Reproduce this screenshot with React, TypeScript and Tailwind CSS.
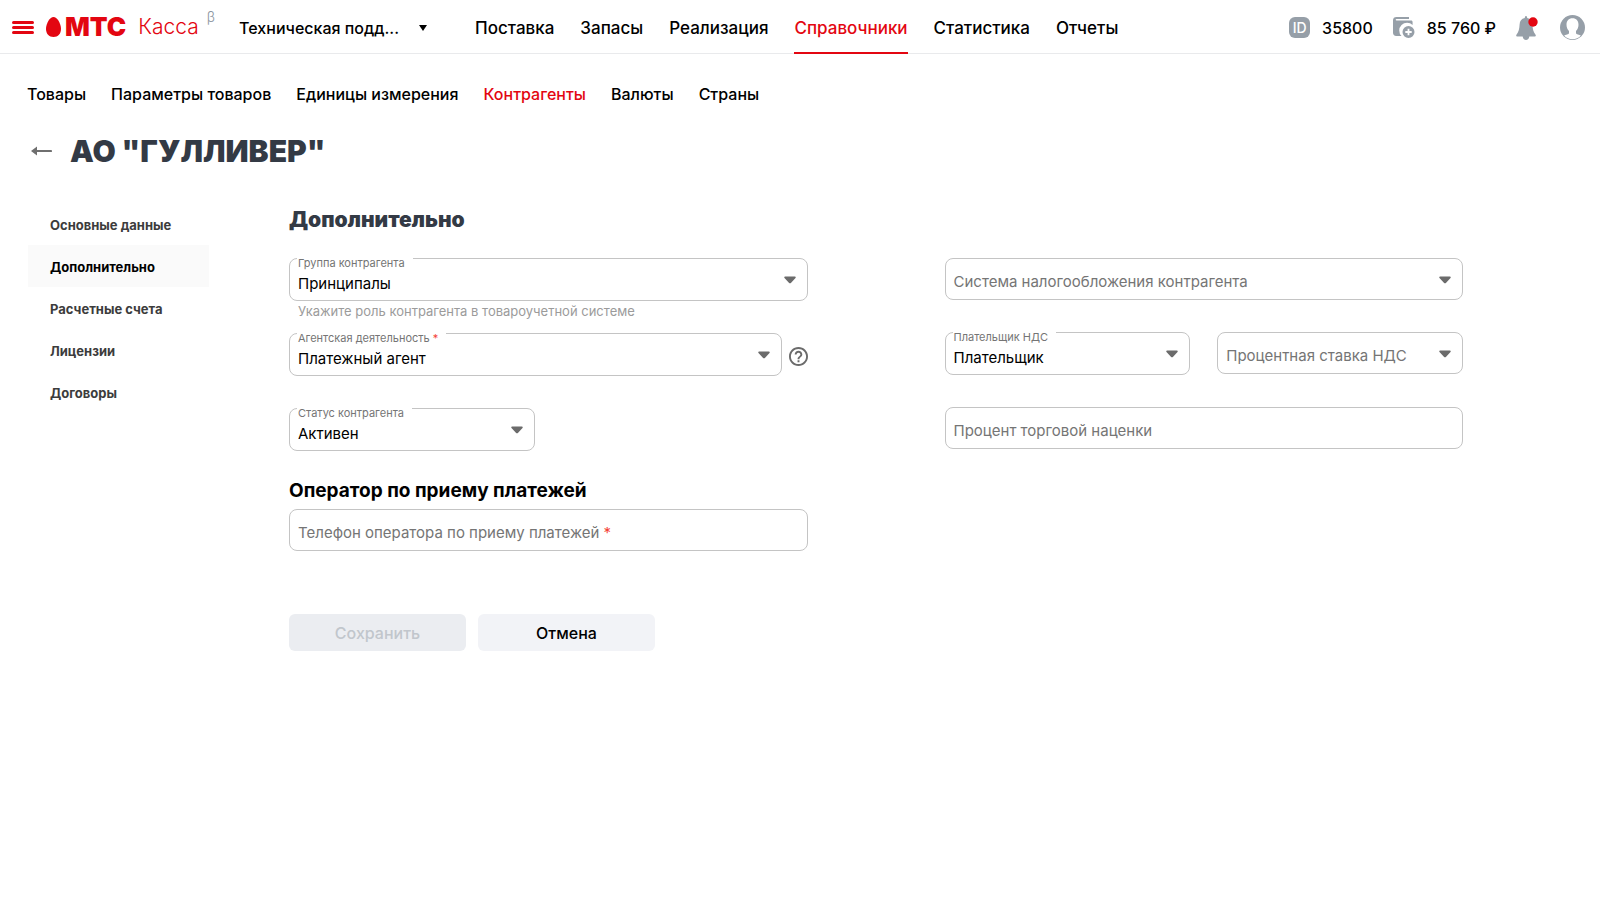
import { ReactNode, useId } from "react";
import clsx from "clsx";

const mainNav = ["Поставка", "Запасы", "Реализация", "Справочники", "Статистика", "Отчеты"];
const subNav = ["Товары", "Параметры товаров", "Единицы измерения", "Контрагенты", "Валюты", "Страны"];
const sections = ["Основные данные", "Дополнительно", "Расчетные счета", "Лицензии", "Договоры"];

type FieldProps = {
  label: string;
  value?: string;
  required?: boolean;
  select?: boolean;
  className?: string;
};

function Field({ label, value = "", required, select, className }: FieldProps) {
  const id = useId();
  const control =
    "block w-full appearance-none rounded-lg border border-[#c4c4c4] bg-white pl-2 text-[15px] text-black outline-none";

  return (
    <div className={clsx("relative", className)}>
      {select ? (
        <select id={id} defaultValue={value} className={clsx(control, value ? "h-[43px] pt-[10px]" : "h-[42px]")}>
          <option value={value}>{value}</option>
        </select>
      ) : (
        <input id={id} type="text" defaultValue={value} className={clsx(control, "h-[42px]")} />
      )}

      {/* Label sits on the border when the field is filled, inside it otherwise */}
      <label
        htmlFor={id}
        className={clsx(
          "pointer-events-none absolute bg-white text-[#757575]",
          value ? "left-2 top-0 pl-px pr-2 text-[11px] leading-[10px]" : "left-2 top-3 pl-px text-[15px] leading-6"
        )}
      >
        {label}
        {required && <span className="text-[#f44336]"> *</span>}
      </label>

      {select && (
        <svg className="pointer-events-none absolute right-3 top-[18px] h-2 w-3" viewBox="0 0 12 8">
          <path d="M1.2 .5h9.6c.9 0 1.3.9.7 1.500L6.900 6.900c-.5.5-1.300.5-1.800 0L.5 2C-.1 1.400.3.5 1.200.5z" fill="#6b6b6b" />
        </svg>
      )}
    </div>
  );
}

function Logo() {
  return (
    <a href="#" className="flex items-center text-[#e30611]">
      <svg className="h-5 w-[15px]" viewBox="0 0 15 20" fill="currentColor">
        <path d="M7.500 0C11 0 15 6.300 15 11.800 15 17 12 20 7.500 20S0 17 0 11.800C0 6.300 4 0 7.500 0z" />
      </svg>
      <span className="ml-1 text-[26px] leading-8 font-black">МТС</span>
      <span className="ml-3 text-[21px] leading-8 font-light">Касса</span>
      <sup className="-top-2.5 ml-2 text-sm font-light text-[#8d969f]">β</sup>
    </a>
  );
}

function WalletIcon() {
  return (
    <svg className="h-[22px] w-[22px]" viewBox="0 0 22 22" fill="#969fa8">
      <path d="M3.500 0H16v2H3.500a.8.8 0 0 0 0 1.600H18c1 0 1.600.6 1.600 1.600V8A7 7 0 0 0 8.500 19H3.200C1.200 19 0 17.800 0 15.800V3.300C0 1.200 1.300 0 3.500 0z" />
      <path
        fillRule="evenodd"
        d="M15.500 9a6 6 0 1 1 0 12 6 6 0 0 1 0-12zm-.9 2.800v2.300h-2.300v1.800h2.300v2.300h1.800v-2.300h2.300v-1.800h-2.300v-2.300z"
      />
    </svg>
  );
}

function BellIcon() {
  return (
    <svg className="h-[26px] w-[22px]" viewBox="0 0 22 26">
      <path
        d="M8.800 3C8.800 1.700 9.200 1 10 1s1.200.7 1.200 2c3.500.6 5 3 5.200 6.500.2 4.500 1 7.500 3 10 .8 1 .4 2-.9 2H1.500c-1.300 0-1.700-1-.9-2 2-2.500 2.800-5.500 3-10C3.800 6 5.300 3.600 8.800 3zM6.700 21.500h6.600c-.2 2.200-1.500 3.500-3.300 3.500s-3.100-1.300-3.300-3.500z"
        fill="#969fa8"
      />
      <circle cx="17" cy="7" r="4.700" fill="#e30611" />
    </svg>
  );
}

function AvatarIcon() {
  return (
    <svg className="h-[25px] w-[25px]" viewBox="0 0 25 25">
      <circle cx="12.500" cy="12.500" r="12.500" fill="#969fa8" />
      <path
        d="M12.500 3.200c3.800 0 6 2.500 6 6.500 0 2.500-.9 4.700-2.500 6.300v2.300c0 1 3.600 1.300 4.800 2.400-2.200 2.300-5 3.500-8.300 3.500s-6.100-1.200-8.300-3.500C5.400 19.600 9 19.300 9 18.300V16c-1.600-1.600-2.500-3.800-2.500-6.300 0-4 2.200-6.500 6-6.500z"
        fill="#fff"
      />
    </svg>
  );
}

function IconButton({ label, children }: { label: string; children: ReactNode }) {
  return (
    <button type="button" aria-label={label}>
      {children}
    </button>
  );
}

function Header() {
  return (
    <header className="flex h-[54px] items-center border-b border-[#e9eaec] pl-3 pr-[15px] text-base font-medium">
      <button type="button" aria-label="Меню" className="mr-3 flex w-[22px] flex-col gap-[2px] pt-0.5">
        <span className="h-[3px] w-full rounded-sm bg-[#e30611]" />
        <span className="h-[3px] w-full rounded-sm bg-[#e30611]" />
        <span className="h-[3px] w-full rounded-sm bg-[#e30611]" />
      </button>
      <Logo />

      <button type="button" className="ml-6 flex w-[188px] items-center justify-between pt-0.5">
        <span>Техническая подд...</span>
        <svg className="h-[6px] w-2" viewBox="0 0 8 6">
          <path d="M0 0h8L4 6z" />
        </svg>
      </button>

      <nav className="ml-12 flex gap-[26px] self-stretch text-[17px]">
        {mainNav.map((item) => (
          <a
            key={item}
            href="#"
            className={clsx(
              "-mb-px flex items-center border-b-2 pt-[6px]",
              item === "Справочники" ? "border-[#e30611] text-[#e30611]" : "border-transparent"
            )}
          >
            {item}
          </a>
        ))}
      </nav>

      <div className="ml-auto flex items-center pt-0.5">
        <span className="flex h-[21px] w-[21px] items-center justify-center rounded-md bg-[#969fa8] text-sm font-medium text-white">
          ID
        </span>
        <span className="ml-3">35800</span>
        <span className="ml-5 mr-3">
          <WalletIcon />
        </span>
        <span>85 760 ₽</span>
        <div className="ml-5 flex items-center gap-[22px]">
          <IconButton label="Уведомления">
            <BellIcon />
          </IconButton>
          <IconButton label="Профиль">
            <AvatarIcon />
          </IconButton>
        </div>
      </div>
    </header>
  );
}

export default function App() {
  return (
    <div className="min-h-screen bg-white font-['Inter','Liberation_Sans',sans-serif] text-black">
      <Header />

      <nav className="flex gap-[25px] px-[27px] pt-7 text-base font-medium">
        {subNav.map((item) => (
          <a key={item} href="#" className={clsx(item === "Контрагенты" && "text-[#e30611]")}>
            {item}
          </a>
        ))}
      </nav>

      <div className="mt-[25px] flex items-center pl-[30px]">
        <button type="button" aria-label="Назад">
          <svg className="h-3 w-[22px]" viewBox="0 0 22 12" fill="#6f6f6f">
            <path d="M7 1.500v3.400h14a1 1 0 0 1 0 2.200H7v3.400L1 6z" />
          </svg>
        </button>
        <h1 className="ml-[18px] text-[30px] leading-10 font-black text-[#333a45]">АО "ГУЛЛИВЕР"</h1>
      </div>

      <div className="mt-8 flex pl-7 pr-[137px]">
        <aside className="w-[181px] shrink-0">
          {sections.map((item) => (
            <a
              key={item}
              href="#"
              className={clsx(
                "flex h-[42px] items-center pt-1 pl-[22px] text-[13px] font-bold",
                item === "Дополнительно" ? "bg-[#fafafa] text-black" : "text-[#3c3c3c]"
              )}
            >
              {item}
            </a>
          ))}
        </aside>

        <form className="ml-20 flex-1">
          <h2 className="text-[21px] leading-[34px] font-black text-[#333a45]">Дополнительно</h2>

          <div className="mt-[21px] grid grid-cols-2 gap-x-[137px]">
            <div>
              <Field label="Группа контрагента" value="Принципалы" select />
              <p className="pl-[9px] text-[13px] leading-5 text-[#9b9b9b]">
                Укажите роль контрагента в товароучетной системе
              </p>
              <div className="mt-3 flex items-center gap-[7px]">
                <Field label="Агентская деятельность" value="Платежный агент" required select className="flex-1" />
                <button type="button" aria-label="Справка" className="mt-1">
                  <svg className="h-[19px] w-[19px]" viewBox="2 2 20 20" fill="#6b6b6b">
                    <path d="M11 18h2v-2h-2v2zm1-16C6.480 2 2 6.480 2 12s4.480 10 10 10 10-4.480 10-10S17.520 2 12 2zm0 18c-4.410 0-8-3.590-8-8s3.590-8 8-8 8 3.590 8 8-3.590 8-8 8zm0-14c-2.210 0-4 1.790-4 4h2c0-1.100.9-2 2-2s2 .9 2 2c0 2-3 1.750-3 5h2c0-2.250 3-2.500 3-5 0-2.210-1.790-4-4-4z" />
                  </svg>
                </button>
              </div>
              <div className="mt-8 grid grid-cols-2 gap-x-[27px]">
                <Field label="Статус контрагента" value="Активен" select />
              </div>
            </div>

            <div>
              <Field label="Система налогообложения контрагента" select />
              <div className="mt-8 grid grid-cols-2 gap-x-[27px]">
                <Field label="Плательщик НДС" value="Плательщик" select />
                <Field label="Процентная ставка НДС" select />
              </div>
              <Field label="Процент торговой наценки" className="mt-8" />
            </div>
          </div>

          <div className="grid grid-cols-2 gap-x-[137px]">
            <div>
              <h3 className="mt-[26px] mb-1 text-[19px] leading-7 font-bold">Оператор по приему платежей</h3>
              <Field label="Телефон оператора по приему платежей" required />
            </div>
          </div>

          <div className="mt-[63px] flex gap-3 text-base font-medium">
            <button type="button" disabled className="h-[37px] w-[177px] rounded-md bg-[#ebedf1] text-[#c1c6cc]">
              Сохранить
            </button>
            <button type="button" className="h-[37px] w-[177px] rounded-md bg-[#f2f3f7]">
              Отмена
            </button>
          </div>
        </form>
      </div>
    </div>
  );
}
